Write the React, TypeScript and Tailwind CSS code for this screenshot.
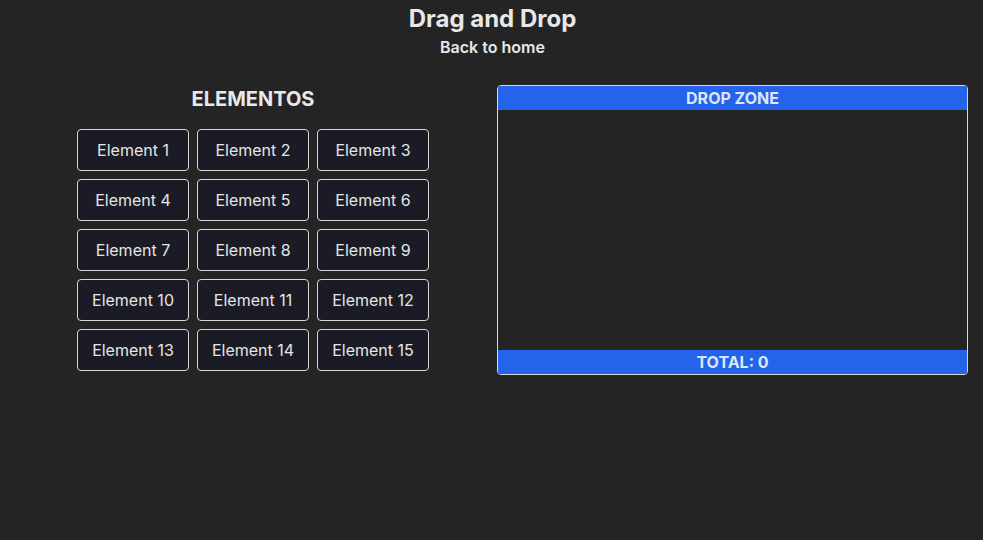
const elements = Array.from({ length: 15 }, (_, i) => `Element ${i + 1}`);

export default function App() {
  return (
    <div className="min-h-screen bg-[#242424] text-[#e8e8e8] font-['Inter',sans-serif] pt-[3px]">
      {/* Header */}
      <div className="flex flex-col items-center pl-[2px]">
        <h1 className="text-2xl font-bold leading-8">Drag and Drop</h1>
        <a className="text-base font-semibold leading-6">Back to home</a>
      </div>

      {/* Main */}
      <div className="grid grid-cols-[472px_471px] gap-2 pl-[17px] mt-[26px]">
        <div className="flex flex-col items-center">
          <h2 className="text-xl font-bold leading-7">ELEMENTOS</h2>
          <div className="grid grid-cols-3 gap-2 mt-[16px]">
            {elements.map((el) => (
              <button
                key={el}
                className="w-28 h-[42px] rounded border border-[#d8d8d8] bg-[#1a1b25] text-base text-[#e5e5e5]"
              >
                {el}
              </button>
            ))}
          </div>
        </div>

        <div className="flex flex-col self-start border border-[#d8d8d8] rounded overflow-hidden">
          <div className="h-6 bg-[#2563eb] text-[#dbe6fb] text-base font-bold leading-6 text-center">
            DROP ZONE
          </div>
          <div className="h-60"></div>
          <div className="h-6 bg-[#2563eb] text-[#dbe6fb] text-base font-bold leading-6 text-center">
            TOTAL: 0
          </div>
        </div>
      </div>
    </div>
  );
}
